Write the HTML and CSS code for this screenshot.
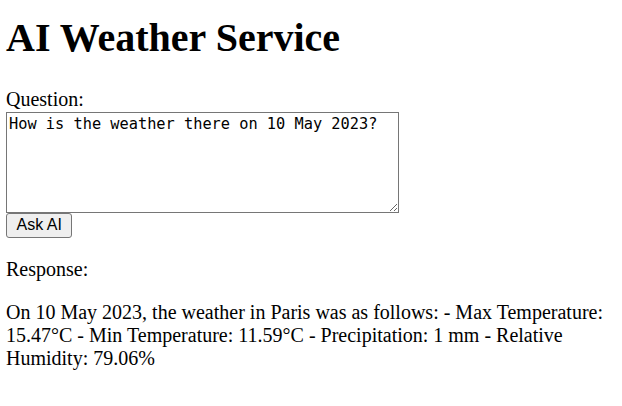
FILE: index.html
```html
<!DOCTYPE html>
<html>
<head>
<meta charset="utf-8">
<title>AI Weather Service</title>
<link rel="stylesheet" href="styles.css">
</head>
<body class="page">
<h1 class="title">AI Weather Service</h1>
<form class="ask-form">
<label class="q-label" for="q">Question:</label>
<textarea class="q-input" id="q">How is the weather there on 10 May 2023?</textarea>
<button class="ask-btn" type="button">Ask AI</button>
</form>
<p class="resp-label">Response:</p>
<p class="resp-text">On 10 May 2023, the weather in Paris was as follows: - Max Temperature: 15.47°C - Min Temperature: 11.59°C - Precipitation: 1 mm - Relative Humidity: 79.06%</p>
</body>
</html>
```
FILE: styles.css
```css
html {
  background: #fff;
}
.page {
  margin: 0 6px;
  font-family: "Liberation Serif", "Times New Roman", serif;
  font-size: 20px;
  line-height: 23px;
  color: #000;
}
.title {
  font-size: 40px;
  line-height: 46px;
  font-weight: bold;
  margin: 14.5px 0 27.3px;
}
.ask-form {
  margin: 0;
  display: flex;
  flex-direction: column;
  align-items: flex-start;
}
.q-label {
  line-height: 23px;
}
.q-input {
  font-family: "DejaVu Sans Mono", monospace;
  font-size: 15.3px;
  line-height: 18px;
  width: 393px;
  height: 101px;
  box-sizing: border-box;
  margin: 1px 0 0;
  padding: 2px;
  border: 1px solid #767676;
  border-radius: 0;
  color: #000;
  background: #fff;
}
.ask-btn {
  font-family: "Liberation Sans", Arial, sans-serif;
  font-size: 16px;
  line-height: 18px;
  height: 25px;
  box-sizing: border-box;
  padding: 0 9.5px;
  margin: 0;
  border: 1px solid #767676;
  border-radius: 3px;
  background: #efefef;
  color: #000;
}
.resp-label, .resp-text {
  margin: 20px 0;
}
```
